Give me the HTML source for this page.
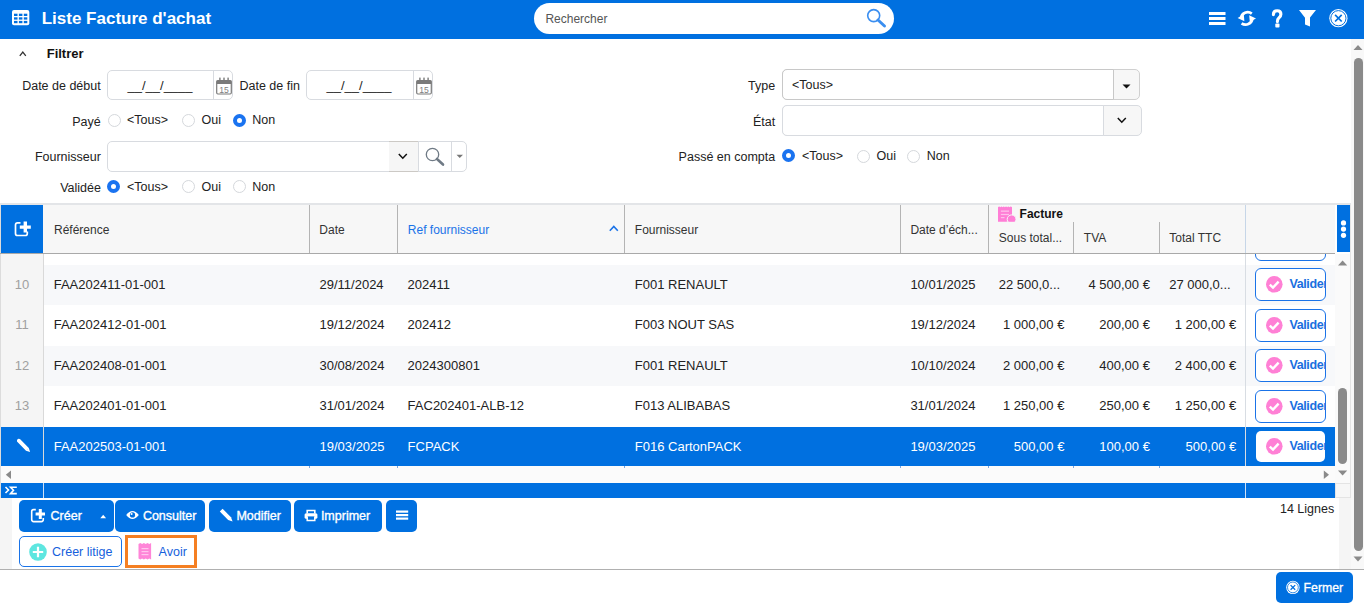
<!DOCTYPE html>
<html><head><meta charset="utf-8">
<style>
html,body{margin:0;padding:0;width:1370px;height:614px;overflow:hidden;background:#fff;font-family:"Liberation Sans",sans-serif;}
.t{position:absolute;white-space:nowrap;}
.b{position:absolute;box-sizing:border-box;}
svg.b{overflow:visible}
</style></head><body>
<div class="b" style="left:0px;top:0px;width:1364px;height:39px;background:#0070e0"></div>
<svg class="b" style="left:11.6px;top:10px" width="18" height="16" viewBox="0 0 18 16"><rect x="0" y="0" width="17.3" height="15.2" rx="2" fill="#fff"/><rect x="2.00" y="3.70" width="3.5" height="2.3" fill="#0070e0"/><rect x="2.00" y="7.30" width="3.5" height="2.3" fill="#0070e0"/><rect x="2.00" y="10.90" width="3.5" height="2.3" fill="#0070e0"/><rect x="6.90" y="3.70" width="3.5" height="2.3" fill="#0070e0"/><rect x="6.90" y="7.30" width="3.5" height="2.3" fill="#0070e0"/><rect x="6.90" y="10.90" width="3.5" height="2.3" fill="#0070e0"/><rect x="11.80" y="3.70" width="3.5" height="2.3" fill="#0070e0"/><rect x="11.80" y="7.30" width="3.5" height="2.3" fill="#0070e0"/><rect x="11.80" y="10.90" width="3.5" height="2.3" fill="#0070e0"/></svg>
<div class="t" style="left:41.70px;top:9.61px;font-size:17px;line-height:17px;color:#fff;font-weight:bold;">Liste Facture d'achat</div>
<div class="b" style="left:534px;top:3px;width:360px;height:31px;background:#fff;border-radius:16px"></div>
<div class="t" style="left:545.40px;top:12.74px;font-size:12px;line-height:12px;color:#555;font-weight:normal;">Rechercher</div>
<svg class="b" style="left:866px;top:8px" width="22" height="21" viewBox="0 0 22 21"><circle cx="7.7" cy="7.6" r="6" fill="none" stroke="#3a8ef0" stroke-width="1.6"/><line x1="12" y1="12" x2="18.5" y2="18" stroke="#3a8ef0" stroke-width="3" stroke-linecap="round"/></svg>
<svg class="b" style="left:1209px;top:11px" width="17" height="15" viewBox="0 0 17 15"><rect x="0" y="1" width="16.5" height="3" fill="#fff"/><rect x="0" y="6" width="16.5" height="3" fill="#fff"/><rect x="0" y="11" width="16.5" height="3" fill="#fff"/></svg>
<svg class="b" style="left:1237px;top:10px" width="20" height="17" viewBox="0 0 20 17"><path d="M14.8 3.6 A6.8 6.8 0 0 0 3.9 8.2" fill="none" stroke="#fff" stroke-width="2.7"/><path d="M0.6 8.0 L6.8 4.6 L7.4 11.2 Z" fill="#fff"/><path d="M4.6 13.3 A6.8 6.8 0 0 0 15.4 8.6" fill="none" stroke="#fff" stroke-width="2.7"/><path d="M19.0 8.4 L12.8 11.8 L12.2 5.2 Z" fill="#fff"/></svg>
<svg class="b" style="left:1271px;top:9px" width="13" height="19" viewBox="0 0 13 19"><path d="M2.4 5.6 Q2.4 1.7 6.2 1.7 Q9.9 1.7 9.9 5.2 Q9.9 7.4 7.8 8.9 Q6.4 9.9 6.4 12.6" fill="none" stroke="#fff" stroke-width="3.1" stroke-linecap="round"/><rect x="4.3" y="14.6" width="4.2" height="3.8" rx="0.9" fill="#fff"/></svg>
<svg class="b" style="left:1299px;top:9px" width="18" height="19" viewBox="0 0 18 19"><path d="M0 1 H17 L11 8.6 V17.6 L6 15.6 V8.8 Z" fill="#fff"/></svg>
<svg class="b" style="left:1329px;top:9px" width="20" height="19" viewBox="0 0 20 19"><circle cx="9.4" cy="9.2" r="9.1" fill="#fff"/><circle cx="9.4" cy="9.2" r="7.6" fill="none" stroke="#0070e0" stroke-width="1"/><path d="M6.1 5.9 L12.7 12.5 M12.7 5.9 L6.1 12.5" stroke="#0070e0" stroke-width="1.7"/></svg>
<div class="b" style="left:1351px;top:39px;width:13px;height:530px;background:#f8f8f8"></div>
<svg class="b" style="left:1353px;top:44px" width="11" height="7" viewBox="0 0 11 7"><path d="M0.5 6 L5 1 L9.5 6 Z" fill="#8a8a8a"/></svg>
<div class="b" style="left:1354px;top:58px;width:9px;height:493px;background:#8a8a8a;border-radius:5px"></div>
<svg class="b" style="left:1353px;top:556px" width="11" height="7" viewBox="0 0 11 7"><path d="M0.5 0.5 L5 5.5 L9.5 0.5 Z" fill="#8a8a8a"/></svg>
<svg class="b" style="left:19px;top:50px" width="8" height="7" viewBox="0 0 8 7"><path d="M0.8 5.8 L3.8 2 L6.8 5.8" fill="none" stroke="#333" stroke-width="1.3"/></svg>
<div class="t" style="left:46.70px;top:46.70px;font-size:13px;line-height:13px;color:#111;font-weight:bold;">Filtrer</div>
<div class="t" style="right:1269.30px;top:79.52px;font-size:12.5px;line-height:12.5px;color:#222;font-weight:normal;text-align:right;">Date de début</div>
<div class="b" style="left:107px;top:70px;width:126px;height:30px;border:1px solid #d8dbe0;border-radius:5px;background:#fff"></div>
<div class="b" style="left:213px;top:70px;width:1px;height:30px;background:#d8dbe0"></div>
<div class="t" style="left:127.50px;top:78.60px;font-size:13px;line-height:13px;color:#222;font-weight:normal;">__/__/____</div>
<svg class="b" style="left:215.7px;top:76.5px" width="16" height="18" viewBox="0 0 16 18"><rect x="0.7" y="3.6" width="14.6" height="13.4" rx="1.2" fill="none" stroke="#7a7a7a" stroke-width="1.2"/><rect x="0.7" y="3.6" width="14.6" height="3.4" fill="#7a7a7a"/><rect x="3.2" y="0.6" width="1.4" height="3.4" fill="#7a7a7a"/><rect x="7.3" y="0.6" width="1.4" height="3.4" fill="#7a7a7a"/><rect x="11.4" y="0.6" width="1.4" height="3.4" fill="#7a7a7a"/><text x="8" y="15.6" font-family="Liberation Sans" font-size="8.6" fill="#808080" text-anchor="middle">15</text></svg>
<div class="t" style="right:1070.10px;top:79.52px;font-size:12.5px;line-height:12.5px;color:#222;font-weight:normal;text-align:right;">Date de fin</div>
<div class="b" style="left:306px;top:70px;width:127px;height:30px;border:1px solid #d8dbe0;border-radius:5px;background:#fff"></div>
<div class="b" style="left:413px;top:70px;width:1px;height:30px;background:#d8dbe0"></div>
<div class="t" style="left:326.50px;top:78.60px;font-size:13px;line-height:13px;color:#222;font-weight:normal;">__/__/____</div>
<svg class="b" style="left:415.7px;top:76.5px" width="16" height="18" viewBox="0 0 16 18"><rect x="0.7" y="3.6" width="14.6" height="13.4" rx="1.2" fill="none" stroke="#7a7a7a" stroke-width="1.2"/><rect x="0.7" y="3.6" width="14.6" height="3.4" fill="#7a7a7a"/><rect x="3.2" y="0.6" width="1.4" height="3.4" fill="#7a7a7a"/><rect x="7.3" y="0.6" width="1.4" height="3.4" fill="#7a7a7a"/><rect x="11.4" y="0.6" width="1.4" height="3.4" fill="#7a7a7a"/><text x="8" y="15.6" font-family="Liberation Sans" font-size="8.6" fill="#808080" text-anchor="middle">15</text></svg>
<div class="t" style="right:1269.30px;top:115.62px;font-size:12.5px;line-height:12.5px;color:#222;font-weight:normal;text-align:right;">Payé</div>
<div class="b" style="left:107.5px;top:113.5px;width:13px;height:13px;border-radius:50%;border:1px solid #d5d8dc;background:#fff"></div>
<div class="t" style="left:127.00px;top:114.42px;font-size:12.5px;line-height:12.5px;color:#222;font-weight:normal;">&lt;Tous&gt;</div>
<div class="b" style="left:182px;top:113.5px;width:13px;height:13px;border-radius:50%;border:1px solid #d5d8dc;background:#fff"></div>
<div class="t" style="left:201.50px;top:114.42px;font-size:12.5px;line-height:12.5px;color:#222;font-weight:normal;">Oui</div>
<div class="b" style="left:233px;top:113.5px;width:13px;height:13px;border-radius:50%;border:4.2px solid #1a73f0;background:#fff"></div>
<div class="t" style="left:252.30px;top:114.42px;font-size:12.5px;line-height:12.5px;color:#222;font-weight:normal;">Non</div>
<div class="t" style="right:1269.10px;top:151.12px;font-size:12.5px;line-height:12.5px;color:#222;font-weight:normal;text-align:right;">Fournisseur</div>
<div class="b" style="left:107px;top:141px;width:360px;height:31px;border:1px solid #d8dbe0;border-radius:5px;background:#fff"></div>
<div class="b" style="left:389px;top:142px;width:29px;height:29px;background:#f6f6f6"></div>
<div class="b" style="left:389px;top:141px;width:29px;height:1px;background:#ccc9c5"></div>
<div class="b" style="left:389px;top:171px;width:29px;height:1px;background:#ccc9c5"></div>
<div class="b" style="left:418px;top:141px;width:1px;height:31px;background:#d8dbe0"></div>
<div class="b" style="left:451px;top:141px;width:1px;height:31px;background:#d8dbe0"></div>
<svg class="b" style="left:398px;top:153px" width="10" height="7" viewBox="0 0 10 7"><path d="M0.8 1 L4.8 5.2 L8.8 1" fill="none" stroke="#111" stroke-width="1.5"/></svg>
<svg class="b" style="left:425px;top:147px" width="21" height="20" viewBox="0 0 21 20"><circle cx="7.5" cy="7.5" r="6.2" fill="none" stroke="#6f7a85" stroke-width="1.3"/><line x1="12" y1="12" x2="18" y2="17.5" stroke="#6f7a85" stroke-width="2.6" stroke-linecap="round"/></svg>
<svg class="b" style="left:456px;top:154px" width="8" height="5" viewBox="0 0 8 5"><path d="M0.5 0.8 H7 L3.75 4 Z" fill="#777"/></svg>
<div class="t" style="right:1269.10px;top:182.02px;font-size:12.5px;line-height:12.5px;color:#222;font-weight:normal;text-align:right;">Validée</div>
<div class="b" style="left:107px;top:180.0px;width:13px;height:13px;border-radius:50%;border:4.2px solid #1a73f0;background:#fff"></div>
<div class="t" style="left:127.00px;top:180.92px;font-size:12.5px;line-height:12.5px;color:#222;font-weight:normal;">&lt;Tous&gt;</div>
<div class="b" style="left:182px;top:180.0px;width:13px;height:13px;border-radius:50%;border:1px solid #d5d8dc;background:#fff"></div>
<div class="t" style="left:201.50px;top:180.92px;font-size:12.5px;line-height:12.5px;color:#222;font-weight:normal;">Oui</div>
<div class="b" style="left:233px;top:180.0px;width:13px;height:13px;border-radius:50%;border:1px solid #d5d8dc;background:#fff"></div>
<div class="t" style="left:252.30px;top:180.92px;font-size:12.5px;line-height:12.5px;color:#222;font-weight:normal;">Non</div>
<div class="t" style="right:594.80px;top:79.92px;font-size:12.5px;line-height:12.5px;color:#222;font-weight:normal;text-align:right;">Type</div>
<div class="b" style="left:782px;top:69px;width:358px;height:31px;border:1px solid #d0d0d0;border-radius:5px;background:#f7f7f7"></div>
<div class="b" style="left:782px;top:69px;width:332px;height:31px;border:1px solid #c8c8c8;border-radius:5px 0 0 5px;background:#fff"></div>
<div class="t" style="left:792.00px;top:78.82px;font-size:12.5px;line-height:12.5px;color:#222;font-weight:normal;">&lt;Tous&gt;</div>
<svg class="b" style="left:1122px;top:84px" width="9" height="5" viewBox="0 0 9 5"><path d="M0.5 0.5 H8.5 L4.5 4.5 Z" fill="#111"/></svg>
<div class="t" style="right:594.80px;top:115.92px;font-size:12.5px;line-height:12.5px;color:#222;font-weight:normal;text-align:right;">État</div>
<div class="b" style="left:782px;top:105px;width:360px;height:31px;border:1px solid #d8dbe0;border-radius:5px;background:#f7f7f7"></div>
<div class="b" style="left:782px;top:105px;width:322px;height:31px;border:1px solid #d8dbe0;border-radius:5px 0 0 5px;background:#fff"></div>
<svg class="b" style="left:1117px;top:117px" width="10" height="7" viewBox="0 0 10 7"><path d="M0.8 1 L4.8 5.2 L8.8 1" fill="none" stroke="#111" stroke-width="1.5"/></svg>
<div class="t" style="right:594.80px;top:151.42px;font-size:12.5px;line-height:12.5px;color:#222;font-weight:normal;text-align:right;">Passé en compta</div>
<div class="b" style="left:782px;top:149.3px;width:13px;height:13px;border-radius:50%;border:4.2px solid #1a73f0;background:#fff"></div>
<div class="t" style="left:802.00px;top:149.92px;font-size:12.5px;line-height:12.5px;color:#222;font-weight:normal;">&lt;Tous&gt;</div>
<div class="b" style="left:857px;top:149.8px;width:13px;height:13px;border-radius:50%;border:1px solid #d5d8dc;background:#fff"></div>
<div class="t" style="left:876.50px;top:149.92px;font-size:12.5px;line-height:12.5px;color:#222;font-weight:normal;">Oui</div>
<div class="b" style="left:907px;top:149.8px;width:13px;height:13px;border-radius:50%;border:1px solid #d5d8dc;background:#fff"></div>
<div class="t" style="left:926.70px;top:149.92px;font-size:12.5px;line-height:12.5px;color:#222;font-weight:normal;">Non</div>
<div class="b" style="left:0px;top:203px;width:1351px;height:2px;background:#e3e5e8"></div>
<div class="b" style="left:0px;top:205px;width:1px;height:293px;background:#dcdcdc"></div>
<div class="b" style="left:1px;top:205px;width:1334px;height:48px;background:#f7f7f7"></div>
<div class="b" style="left:1px;top:205px;width:42px;height:48px;background:#0070e0"></div>
<svg class="b" style="left:14px;top:221px" width="17" height="16" viewBox="0 0 17 16"><path d="M6.5 1.8 H3.6 Q1.5 1.8 1.5 3.9 V12.4 Q1.5 14.5 3.6 14.5 H11.2 Q13.3 14.5 13.3 12.4 V10.5" fill="none" stroke="#fff" stroke-width="1.7"/><path d="M5.8 4.4 H9.6 V0.6 H13 V4.4 H16.8 V7.8 H13 V11.6 H9.6 V7.8 H5.8 Z" fill="#fff"/></svg>
<div class="b" style="left:0px;top:253px;width:1335px;height:1px;background:#a9a9a9"></div>
<div class="b" style="left:309px;top:205px;width:1px;height:48px;background:#b4b4b4"></div>
<div class="b" style="left:397px;top:205px;width:1px;height:48px;background:#b4b4b4"></div>
<div class="b" style="left:624px;top:205px;width:1px;height:48px;background:#b4b4b4"></div>
<div class="b" style="left:900px;top:205px;width:1px;height:48px;background:#b4b4b4"></div>
<div class="b" style="left:988px;top:205px;width:1px;height:48px;background:#b4b4b4"></div>
<div class="b" style="left:1073px;top:222px;width:1px;height:31px;background:#b4b4b4"></div>
<div class="b" style="left:1159px;top:222px;width:1px;height:31px;background:#b4b4b4"></div>
<div class="b" style="left:1245px;top:205px;width:1px;height:48px;background:#c6d6e8"></div>
<div class="t" style="left:54.00px;top:223.54px;font-size:12px;line-height:12px;color:#333;font-weight:normal;">Référence</div>
<div class="t" style="left:319.30px;top:223.74px;font-size:12px;line-height:12px;color:#333;font-weight:normal;">Date</div>
<div class="t" style="left:407.80px;top:223.74px;font-size:12px;line-height:12px;color:#1a73e8;font-weight:normal;">Ref fournisseur</div>
<svg class="b" style="left:609px;top:225px" width="10" height="7" viewBox="0 0 10 7"><path d="M0.8 5.8 L4.8 1.5 L8.8 5.8" fill="none" stroke="#1a73e8" stroke-width="1.6"/></svg>
<div class="t" style="left:634.80px;top:223.74px;font-size:12px;line-height:12px;color:#333;font-weight:normal;">Fournisseur</div>
<div class="t" style="left:910.40px;top:223.74px;font-size:12px;line-height:12px;color:#333;font-weight:normal;">Date d&#8217;éch...</div>
<svg class="b" style="left:998px;top:206px" width="19" height="17" viewBox="0 0 19 17"><path d="M0 1.2 Q1.2 0 2.3 1.2 Q3.5 0 4.6 1.2 Q5.8 0 6.9 1.2 Q8.1 0 9.2 1.2 Q10.4 0 11.5 1.2 Q12.7 0 14 1.2 V15.7 H0 Z" fill="#ff7ed6"/><rect x="2.9" y="4.5" width="8.1" height="1.3" fill="#ffc0ec"/><rect x="2.9" y="7.9" width="8.1" height="1.2" fill="#ffc0ec"/><rect x="2.9" y="11" width="3.6" height="1.2" fill="#ffc0ec"/><circle cx="13.6" cy="13.3" r="4.4" fill="#ff7ed6" stroke="#f7f7f7" stroke-width="1"/><rect x="8.4" y="15.8" width="10.5" height="2.5" fill="#f7f7f7"/></svg>
<div class="t" style="left:1019.60px;top:207.64px;font-size:12px;line-height:12px;color:#111;font-weight:bold;">Facture</div>
<div class="t" style="left:998.80px;top:231.74px;font-size:12px;line-height:12px;color:#333;font-weight:normal;">Sous total...</div>
<div class="t" style="left:1083.80px;top:231.74px;font-size:12px;line-height:12px;color:#333;font-weight:normal;">TVA</div>
<div class="t" style="left:1169.30px;top:231.74px;font-size:12px;line-height:12px;color:#333;font-weight:normal;">Total TTC</div>
<div class="b" style="left:1337px;top:205px;width:13px;height:47px;background:#0070e0"></div>
<svg class="b" style="left:1339px;top:217px" width="9" height="24" viewBox="0 0 9 24"><circle cx="4.5" cy="5.9" r="2.6" fill="#fff"/><circle cx="4.5" cy="12.1" r="2.6" fill="#fff"/><circle cx="4.5" cy="18.3" r="2.6" fill="#fff"/></svg>
<div class="b" style="left:1335px;top:203px;width:16px;height:2px;background:#e3e5e8"></div>
<div class="b" style="left:1350px;top:205px;width:1px;height:293px;background:#e4e4e4"></div>
<div class="b" style="left:1px;top:254px;width:1334px;height:212px;overflow:hidden">
<div class="b" style="left:0px;top:0px;width:42px;height:212px;background:#f5f5f5"></div>
<div class="b" style="left:1254px;top:-26px;width:71px;height:33px;background:#fff;border:1px solid #1a73e8;border-radius:6px"></div>
<svg class="b" style="left:1264.5px;top:-18.20px" width="17" height="17" viewBox="0 0 17 17"><circle cx="8.3" cy="8.3" r="8.3" fill="#ff80d5"/><path d="M3.8 8.6 L7.0 11.6 L12.6 5.6" fill="none" stroke="#fff" stroke-width="2.4"/></svg>
<div class="b" style="left:1287px;top:-29.69999999999999px;width:37px;height:40px;overflow:hidden"><div class="t" style="left:1.5px;top:13.4px;font-size:12.5px;line-height:13px;color:#1a6fe0;font-weight:bold;letter-spacing:-0.4px">Valider</div></div>
<div class="b" style="left:43px;top:11px;width:1291px;height:40px;background:#f7f8fa"></div>
<div class="t" style="left:0px;width:42px;text-align:center;top:23.80px;font-size:13px;line-height:13px;color:#a0a0a0">10</div>
<div class="t" style="left:52.70px;top:23.80px;font-size:13px;line-height:13px;color:#222;font-weight:normal">FAA202411-01-001</div>
<div class="t" style="left:318.50px;top:23.80px;font-size:13px;line-height:13px;color:#222;font-weight:normal">29/11/2024</div>
<div class="t" style="left:406.60px;top:23.80px;font-size:13px;line-height:13px;color:#222;font-weight:normal">202411</div>
<div class="t" style="left:633.80px;top:23.80px;font-size:13px;line-height:13px;color:#222;font-weight:normal">F001 RENAULT</div>
<div class="t" style="left:909.40px;top:23.80px;font-size:13px;line-height:13px;color:#222;font-weight:normal">10/01/2025</div>
<div class="t" style="left:997.70px;top:23.80px;font-size:13px;line-height:13px;color:#222;font-weight:normal">22 500,0...</div>
<div class="t" style="right:185.10px;top:23.80px;font-size:13px;line-height:13px;color:#222;font-weight:normal;text-align:right">4 500,00 €</div>
<div class="t" style="left:1168.20px;top:23.80px;font-size:13px;line-height:13px;color:#222;font-weight:normal">27 000,0...</div>
<div class="b" style="left:1254px;top:14px;width:71px;height:33px;background:#fff;border:1px solid #1a73e8;border-radius:6px"></div>
<svg class="b" style="left:1264.5px;top:22.30px" width="17" height="17" viewBox="0 0 17 17"><circle cx="8.3" cy="8.3" r="8.3" fill="#ff80d5"/><path d="M3.8 8.6 L7.0 11.6 L12.6 5.6" fill="none" stroke="#fff" stroke-width="2.4"/></svg>
<div class="b" style="left:1287px;top:10.800000000000011px;width:37px;height:40px;overflow:hidden"><div class="t" style="left:1.5px;top:13.4px;font-size:12.5px;line-height:13px;color:#1a6fe0;font-weight:bold;letter-spacing:-0.4px">Valider</div></div>
<div class="t" style="left:0px;width:42px;text-align:center;top:64.30px;font-size:13px;line-height:13px;color:#a0a0a0">11</div>
<div class="t" style="left:52.70px;top:64.30px;font-size:13px;line-height:13px;color:#222;font-weight:normal">FAA202412-01-001</div>
<div class="t" style="left:318.50px;top:64.30px;font-size:13px;line-height:13px;color:#222;font-weight:normal">19/12/2024</div>
<div class="t" style="left:406.60px;top:64.30px;font-size:13px;line-height:13px;color:#222;font-weight:normal">202412</div>
<div class="t" style="left:633.80px;top:64.30px;font-size:13px;line-height:13px;color:#222;font-weight:normal">F003 NOUT SAS</div>
<div class="t" style="left:909.40px;top:64.30px;font-size:13px;line-height:13px;color:#222;font-weight:normal">19/12/2024</div>
<div class="t" style="right:270.60px;top:64.30px;font-size:13px;line-height:13px;color:#222;font-weight:normal;text-align:right">1 000,00 €</div>
<div class="t" style="right:185.10px;top:64.30px;font-size:13px;line-height:13px;color:#222;font-weight:normal;text-align:right">200,00 €</div>
<div class="t" style="right:98.80px;top:64.30px;font-size:13px;line-height:13px;color:#222;font-weight:normal;text-align:right">1 200,00 €</div>
<div class="b" style="left:1254px;top:55px;width:71px;height:33px;background:#fff;border:1px solid #1a73e8;border-radius:6px"></div>
<svg class="b" style="left:1264.5px;top:62.80px" width="17" height="17" viewBox="0 0 17 17"><circle cx="8.3" cy="8.3" r="8.3" fill="#ff80d5"/><path d="M3.8 8.6 L7.0 11.6 L12.6 5.6" fill="none" stroke="#fff" stroke-width="2.4"/></svg>
<div class="b" style="left:1287px;top:51.30000000000001px;width:37px;height:40px;overflow:hidden"><div class="t" style="left:1.5px;top:13.4px;font-size:12.5px;line-height:13px;color:#1a6fe0;font-weight:bold;letter-spacing:-0.4px">Valider</div></div>
<div class="b" style="left:43px;top:92px;width:1291px;height:40px;background:#f7f8fa"></div>
<div class="t" style="left:0px;width:42px;text-align:center;top:104.80px;font-size:13px;line-height:13px;color:#a0a0a0">12</div>
<div class="t" style="left:52.70px;top:104.80px;font-size:13px;line-height:13px;color:#222;font-weight:normal">FAA202408-01-001</div>
<div class="t" style="left:318.50px;top:104.80px;font-size:13px;line-height:13px;color:#222;font-weight:normal">30/08/2024</div>
<div class="t" style="left:406.60px;top:104.80px;font-size:13px;line-height:13px;color:#222;font-weight:normal">2024300801</div>
<div class="t" style="left:633.80px;top:104.80px;font-size:13px;line-height:13px;color:#222;font-weight:normal">F001 RENAULT</div>
<div class="t" style="left:909.40px;top:104.80px;font-size:13px;line-height:13px;color:#222;font-weight:normal">10/10/2024</div>
<div class="t" style="right:270.60px;top:104.80px;font-size:13px;line-height:13px;color:#222;font-weight:normal;text-align:right">2 000,00 €</div>
<div class="t" style="right:185.10px;top:104.80px;font-size:13px;line-height:13px;color:#222;font-weight:normal;text-align:right">400,00 €</div>
<div class="t" style="right:98.80px;top:104.80px;font-size:13px;line-height:13px;color:#222;font-weight:normal;text-align:right">2 400,00 €</div>
<div class="b" style="left:1254px;top:95px;width:71px;height:33px;background:#fff;border:1px solid #1a73e8;border-radius:6px"></div>
<svg class="b" style="left:1264.5px;top:103.30px" width="17" height="17" viewBox="0 0 17 17"><circle cx="8.3" cy="8.3" r="8.3" fill="#ff80d5"/><path d="M3.8 8.6 L7.0 11.6 L12.6 5.6" fill="none" stroke="#fff" stroke-width="2.4"/></svg>
<div class="b" style="left:1287px;top:91.80000000000001px;width:37px;height:40px;overflow:hidden"><div class="t" style="left:1.5px;top:13.4px;font-size:12.5px;line-height:13px;color:#1a6fe0;font-weight:bold;letter-spacing:-0.4px">Valider</div></div>
<div class="t" style="left:0px;width:42px;text-align:center;top:145.30px;font-size:13px;line-height:13px;color:#a0a0a0">13</div>
<div class="t" style="left:52.70px;top:145.30px;font-size:13px;line-height:13px;color:#222;font-weight:normal">FAA202401-01-001</div>
<div class="t" style="left:318.50px;top:145.30px;font-size:13px;line-height:13px;color:#222;font-weight:normal">31/01/2024</div>
<div class="t" style="left:406.60px;top:145.30px;font-size:13px;line-height:13px;color:#222;font-weight:normal">FAC202401-ALB-12</div>
<div class="t" style="left:633.80px;top:145.30px;font-size:13px;line-height:13px;color:#222;font-weight:normal">F013 ALIBABAS</div>
<div class="t" style="left:909.40px;top:145.30px;font-size:13px;line-height:13px;color:#222;font-weight:normal">31/01/2024</div>
<div class="t" style="right:270.60px;top:145.30px;font-size:13px;line-height:13px;color:#222;font-weight:normal;text-align:right">1 250,00 €</div>
<div class="t" style="right:185.10px;top:145.30px;font-size:13px;line-height:13px;color:#222;font-weight:normal;text-align:right">250,00 €</div>
<div class="t" style="right:98.80px;top:145.30px;font-size:13px;line-height:13px;color:#222;font-weight:normal;text-align:right">1 250,00 €</div>
<div class="b" style="left:1254px;top:136px;width:71px;height:33px;background:#fff;border:1px solid #1a73e8;border-radius:6px"></div>
<svg class="b" style="left:1264.5px;top:143.80px" width="17" height="17" viewBox="0 0 17 17"><circle cx="8.3" cy="8.3" r="8.3" fill="#ff80d5"/><path d="M3.8 8.6 L7.0 11.6 L12.6 5.6" fill="none" stroke="#fff" stroke-width="2.4"/></svg>
<div class="b" style="left:1287px;top:132.3px;width:37px;height:40px;overflow:hidden"><div class="t" style="left:1.5px;top:13.4px;font-size:12.5px;line-height:13px;color:#1a6fe0;font-weight:bold;letter-spacing:-0.4px">Valider</div></div>
<div class="b" style="left:0px;top:173px;width:1334px;height:39px;background:#0070e0"></div>
<svg class="b" style="left:15px;top:184px" width="16" height="16" viewBox="0 0 16 16"><path d="M1.0 3.6 Q0.6 1.9 1.9 1.0 Q3.2 0.3 4.2 1.3 L12.8 9.9 L14.1 14.0 L10.0 12.7 Z" fill="#fff"/><path d="M10.9 12.0 L12.3 10.6" stroke="#cfe0f8" stroke-width="0.7"/></svg>
<div class="t" style="left:52.70px;top:185.80px;font-size:13px;line-height:13px;color:#fff;font-weight:normal">FAA202503-01-001</div>
<div class="t" style="left:318.50px;top:185.80px;font-size:13px;line-height:13px;color:#fff;font-weight:normal">19/03/2025</div>
<div class="t" style="left:406.60px;top:185.80px;font-size:13px;line-height:13px;color:#fff;font-weight:normal">FCPACK</div>
<div class="t" style="left:633.80px;top:185.80px;font-size:13px;line-height:13px;color:#fff;font-weight:normal">F016 CartonPACK</div>
<div class="t" style="left:909.40px;top:185.80px;font-size:13px;line-height:13px;color:#fff;font-weight:normal">19/03/2025</div>
<div class="t" style="right:270.60px;top:185.80px;font-size:13px;line-height:13px;color:#fff;font-weight:normal;text-align:right">500,00 €</div>
<div class="t" style="right:185.10px;top:185.80px;font-size:13px;line-height:13px;color:#fff;font-weight:normal;text-align:right">100,00 €</div>
<div class="t" style="right:98.80px;top:185.80px;font-size:13px;line-height:13px;color:#fff;font-weight:normal;text-align:right">500,00 €</div>
<div class="b" style="left:1255px;top:177px;width:69px;height:31px;background:#fff;border-radius:5px;overflow:hidden"></div>
<svg class="b" style="left:1264.5px;top:184.30px" width="17" height="17" viewBox="0 0 17 17"><circle cx="8.3" cy="8.3" r="8.3" fill="#ff80d5"/><path d="M3.8 8.6 L7.0 11.6 L12.6 5.6" fill="none" stroke="#fff" stroke-width="2.4"/></svg>
<div class="b" style="left:1287px;top:172.8px;width:37px;height:40px;overflow:hidden"><div class="t" style="left:1.5px;top:13.4px;font-size:12.5px;line-height:13px;color:#1a6fe0;font-weight:bold;letter-spacing:-0.4px">Valider</div></div>
<div class="b" style="left:42px;top:0px;width:1px;height:212px;background:#d9d9d9"></div>
<div class="b" style="left:1244px;top:0px;width:1px;height:212px;background:#d8dde3"></div>
</div>
<div class="b" style="left:1335px;top:254px;width:15px;height:229px;background:#fafafa"></div>
<svg class="b" style="left:1338px;top:260px" width="10" height="6" viewBox="0 0 10 6"><path d="M0 5.5 L4.6 0.5 L9.2 5.5 Z" fill="#8a8a8a"/></svg>
<div class="b" style="left:1338px;top:388px;width:9px;height:76px;background:#8a8a8a;border-radius:5px"></div>
<svg class="b" style="left:1338px;top:470px" width="10" height="6" viewBox="0 0 10 6"><path d="M0 0.5 L4.6 5.5 L9.2 0.5 Z" fill="#8a8a8a"/></svg>
<div class="b" style="left:1px;top:466px;width:1334px;height:17px;background:#fbfbfb"></div>
<svg class="b" style="left:5px;top:470px" width="7" height="10" viewBox="0 0 7 10"><path d="M6 0.5 V9 L0.8 4.75 Z" fill="#8a8a8a"/></svg>
<svg class="b" style="left:1323px;top:470px" width="7" height="10" viewBox="0 0 7 10"><path d="M0.8 0.5 V9 L6 4.75 Z" fill="#8a8a8a"/></svg>
<div class="b" style="left:309px;top:466px;width:1px;height:2px;background:#7aa6e0"></div>
<div class="b" style="left:397px;top:466px;width:1px;height:2px;background:#7aa6e0"></div>
<div class="b" style="left:624px;top:466px;width:1px;height:2px;background:#7aa6e0"></div>
<div class="b" style="left:900px;top:466px;width:1px;height:2px;background:#7aa6e0"></div>
<div class="b" style="left:988px;top:466px;width:1px;height:2px;background:#7aa6e0"></div>
<div class="b" style="left:1073px;top:466px;width:1px;height:2px;background:#7aa6e0"></div>
<div class="b" style="left:1159px;top:466px;width:1px;height:2px;background:#7aa6e0"></div>
<div class="b" style="left:1px;top:483px;width:1334px;height:15px;background:#0070e0"></div>
<div class="b" style="left:43px;top:483px;width:1px;height:15px;background:#cfe0f5"></div>
<div class="b" style="left:1245px;top:483px;width:1px;height:15px;background:#cfe0f5"></div>
<svg class="b" style="left:5px;top:486px" width="13" height="9" viewBox="0 0 13 9"><path d="M0.5 1 L3.5 4 L0.5 7" fill="none" stroke="#fff" stroke-width="1.6"/><path d="M11.8 1.2 H5.5 L8.5 4.3 L5.5 7.6 H11.8" fill="none" stroke="#fff" stroke-width="1.6"/></svg>
<div class="b" style="left:1335px;top:483px;width:16px;height:15px;background:#f7f7f7;border:1px solid #e4e4e4"></div>
<div class="b" style="left:0px;top:498px;width:12px;height:71px;background:#f5f5f5"></div>
<div class="b" style="left:1339px;top:498px;width:12px;height:71px;background:#f5f5f5"></div>
<div class="b" style="left:0px;top:569px;width:1364px;height:1px;background:#b0b0b0"></div>
<div class="b" style="left:19px;top:500px;width:95px;height:32px;background:#0070e0;border-radius:5px"></div>
<div class="b" style="left:115px;top:500px;width:90px;height:32px;background:#0070e0;border-radius:5px"></div>
<div class="b" style="left:209px;top:500px;width:82px;height:32px;background:#0070e0;border-radius:5px"></div>
<div class="b" style="left:294px;top:500px;width:88px;height:32px;background:#0070e0;border-radius:5px"></div>
<div class="b" style="left:386px;top:500px;width:31px;height:32px;background:#0070e0;border-radius:5px"></div>
<svg class="b" style="left:30px;top:508px" width="16" height="15" viewBox="0 0 16 15"><path d="M5.8 1.6 H3.7 Q1.7 1.6 1.7 3.6 V11.6 Q1.7 13.6 3.7 13.6 H11.3 Q13.3 13.6 13.3 11.6 V10" fill="none" stroke="#fff" stroke-width="1.6"/><path d="M5.6 4.5 H8.8 V1 H11.8 V4.5 H15 V7.5 H11.8 V11 H8.8 V7.5 H5.6 Z" fill="#fff"/></svg>
<div class="t" style="left:50.60px;top:510.22px;font-size:12.5px;line-height:12.5px;color:#fff;font-weight:normal;-webkit-text-stroke:0.35px #fff">Créer</div>
<svg class="b" style="left:100px;top:514px" width="7" height="5" viewBox="0 0 7 5"><path d="M0.3 4.2 L3.2 0.8 L6.1 4.2 Z" fill="#fff"/></svg>
<svg class="b" style="left:126px;top:510px" width="14" height="10" viewBox="0 0 14 10"><path d="M0.2 5 Q6.5 -2.8 12.8 5 Q6.5 12.8 0.2 5 Z" fill="#fff"/><circle cx="6.5" cy="4.9" r="2.6" fill="#0070e0"/><circle cx="5.6" cy="4.1" r="1" fill="#fff"/></svg>
<div class="t" style="left:142.90px;top:510.22px;font-size:12.5px;line-height:12.5px;color:#fff;font-weight:normal;-webkit-text-stroke:0.35px #fff">Consulter</div>
<svg class="b" style="left:219px;top:508px" width="15" height="15" viewBox="0 0 15 15"><path d="M0.8 3.6 L3.6 0.8 L12 9.2 L13.6 13.6 L9.2 12 Z" fill="#fff"/></svg>
<div class="t" style="left:236.40px;top:510.22px;font-size:12.5px;line-height:12.5px;color:#fff;font-weight:normal;-webkit-text-stroke:0.35px #fff">Modifier</div>
<svg class="b" style="left:304px;top:509px" width="14" height="13" viewBox="0 0 14 13"><path d="M3.2 4.5 V1.5 H10.8 V4.5" fill="none" stroke="#fff" stroke-width="1.6"/><rect x="0.6" y="4.2" width="12.8" height="5.6" rx="1.6" fill="#fff"/><rect x="3.4" y="7.4" width="7.2" height="3.9" fill="#0070e0"/><path d="M3.2 7.4 V11.6 H10.8 V7.4" fill="none" stroke="#fff" stroke-width="1.5"/></svg>
<div class="t" style="left:320.90px;top:510.22px;font-size:12.5px;line-height:12.5px;color:#fff;font-weight:normal;-webkit-text-stroke:0.35px #fff">Imprimer</div>
<svg class="b" style="left:396px;top:510px" width="13" height="11" viewBox="0 0 13 11"><rect x="0" y="0.5" width="12.2" height="2.2" fill="#fff"/><rect x="0" y="4" width="12.2" height="2.2" fill="#fff"/><rect x="0" y="7.5" width="12.2" height="2.2" fill="#fff"/></svg>
<div class="b" style="left:19px;top:536px;width:103px;height:31px;background:#fff;border:1px solid #1a73e8;border-radius:5px"></div>
<svg class="b" style="left:29px;top:543px" width="18" height="18" viewBox="0 0 18 18"><circle cx="9" cy="9" r="8.8" fill="#5ee6e0"/><path d="M9 3.8 V14.2 M3.8 9 H14.2" stroke="#fff" stroke-width="2.2"/></svg>
<div class="t" style="left:52.00px;top:545.72px;font-size:12.5px;line-height:12.5px;color:#165fdc;font-weight:normal;">Créer litige</div>
<div class="b" style="left:125px;top:535px;width:72px;height:33px;background:#fff;border:3px solid #f57f22"></div>
<svg class="b" style="left:138px;top:543px" width="14" height="17" viewBox="0 0 14 17"><path d="M0.5 1 L2.3 0 L4.1 1 L5.9 0 L7.7 1 L9.5 0 L11.3 1 L13.1 0 V16.5 L11.3 15.5 L9.5 16.5 L7.7 15.5 L5.9 16.5 L4.1 15.5 L2.3 16.5 L0.5 15.5 Z" fill="#ff85d8"/><rect x="3.5" y="5" width="7" height="1.2" fill="#ffc6ee"/><rect x="3.5" y="8" width="7" height="1.2" fill="#ffc6ee"/><rect x="3.5" y="11" width="7" height="1.2" fill="#ffc6ee"/></svg>
<div class="t" style="left:158.60px;top:545.82px;font-size:12.5px;line-height:12.5px;color:#165fdc;font-weight:normal;">Avoir</div>
<div class="t" style="right:35.80px;top:503.42px;font-size:12.5px;line-height:12.5px;color:#222;font-weight:normal;text-align:right;">14 Lignes</div>
<div class="b" style="left:1276px;top:572px;width:77px;height:31px;background:#0070e0;border-radius:5px"></div>
<svg class="b" style="left:1286px;top:580px" width="15" height="15" viewBox="0 0 15 15"><circle cx="6.9" cy="7.4" r="6.7" fill="#fff"/><circle cx="6.9" cy="7.4" r="5.4" fill="none" stroke="#0070e0" stroke-width="0.8"/><path d="M4.6 5.1 L9.2 9.7 M9.2 5.1 L4.6 9.7" stroke="#0070e0" stroke-width="1.3"/></svg>
<div class="t" style="left:1303.60px;top:582.19px;font-size:12.3px;line-height:12.3px;color:#fff;font-weight:normal;-webkit-text-stroke:0.3px #fff">Fermer</div>
</body></html>
